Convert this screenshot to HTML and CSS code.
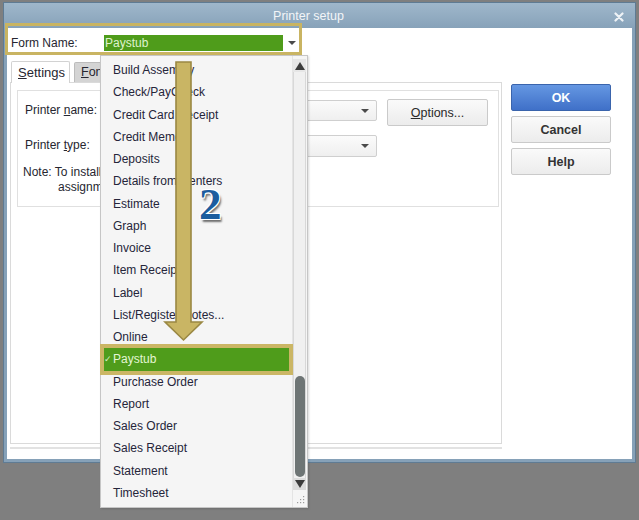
FILE: index.html
```html
<!DOCTYPE html>
<html>
<head>
<meta charset="utf-8">
<title>Printer setup</title>
<link rel="stylesheet" href="styles.css">
</head>
<body>
<div class="dialog">
  <div class="titlebar">
    <span class="title">Printer setup</span>
    <svg class="close" width="10" height="10" viewBox="0 0 10 10"><path d="M1.5 1.5L8.5 8.5M8.5 1.5L1.5 8.5" stroke="#eef2f6" stroke-width="2.2" stroke-linecap="round"/></svg>
  </div>
  <div class="client">
    <div class="formrow">
      <span class="label">Form Name:</span>
      <div class="combo">
        <span class="combo-value">Paystub</span>
        <span class="combo-btn"><i class="tri"></i></span>
      </div>
    </div>
    <div class="main">
      <div class="tabs">
        <div class="tabstrip">
          <div class="tab active"><u>S</u>ettings</div>
          <div class="tab"><u>F</u>onts</div>
        </div>
        <div class="panel">
          <div class="group">
            <div class="prow first">
              <span class="plabel">Printer <u>n</u>ame:</span>
              <div class="pselect"><i class="tri"></i></div>
              <button class="btn options"><u>O</u>ptions...</button>
            </div>
            <div class="prow second">
              <span class="plabel">Printer <u>t</u>ype:</span>
              <div class="pselect tall"><i class="tri"></i></div>
            </div>
            <div class="note">
              <span class="nl1">Note: To install additional printers or to</span>
              <span class="nl2">assignments, use the Windows Control</span>
            </div>
          </div>
        </div>
        <div class="panel-line"></div>
      </div>
      <div class="buttons">
        <button class="btn primary">OK</button>
        <button class="btn">Cancel</button>
        <button class="btn">Help</button>
      </div>
    </div>
  </div>
</div>

<div class="dropdown">
  <ul class="list">
    <li>Build Assembly</li>
    <li>Check/PayCheck</li>
    <li>Credit Card Receipt</li>
    <li>Credit Memo</li>
    <li>Deposits</li>
    <li>Details from Centers</li>
    <li>Estimate</li>
    <li>Graph</li>
    <li>Invoice</li>
    <li>Item Receipt</li>
    <li>Label</li>
    <li>List/Register Notes...</li>
    <li>Online</li>
    <li class="selected"><span class="check">&#10003;</span>Paystub</li>
    <li>Purchase Order</li>
    <li>Report</li>
    <li>Sales Order</li>
    <li>Sales Receipt</li>
    <li>Statement</li>
    <li>Timesheet</li>
  </ul>
  <div class="vscroll">
    <div class="sb-btn"><i class="tri-up"></i></div>
    <div class="sb-track"><div class="sb-thumb"></div></div>
    <div class="sb-btn down"><i class="tri"></i></div>
    <div class="grip">
      <svg width="8" height="8" viewBox="0 0 8 8"><g fill="#9a9a9a"><rect x="6" y="0" width="1.2" height="1.2"/><rect x="3" y="3" width="1.2" height="1.2"/><rect x="6" y="3" width="1.2" height="1.2"/><rect x="0" y="6" width="1.2" height="1.2"/><rect x="3" y="6" width="1.2" height="1.2"/><rect x="6" y="6" width="1.2" height="1.2"/></g></svg>
    </div>
  </div>
</div>

<div class="anno-box"></div>
<svg class="anno-arrow" width="42" height="284" viewBox="0 0 42 284">
  <polygon points="13,2 28,2 28,262 39,262 20.5,280 2,262 13,262" fill="#c9b564" stroke="#9a8843" stroke-width="1.6" stroke-linejoin="miter"/>
</svg>
<div class="anno-num">2</div>
</body>
</html>
```
FILE: styles.css
```css
* { box-sizing: border-box; }
html, body { margin: 0; padding: 0; }
body {
  background: #7f7f7f;
  width: 639px;
  height: 520px;
  overflow: hidden;
  font-family: "Liberation Sans", Arial, sans-serif;
  font-size: 12px;
  color: #262630;
}
u { text-decoration: underline; text-underline-offset: 1px; }

.dialog {
  margin: 2px 0 0 3px;
  width: 633px;
  height: 461px;
  border: 1px solid #5f7b93;
  background: #86a1b8;
  display: flex;
  flex-direction: column;
}
.titlebar {
  height: 25px;
  flex: none;
  background: linear-gradient(#9fb7cb, #87a2b9);
  display: flex;
  align-items: center;
  justify-content: center;
  position: relative;
}
.title {
  color: #f2f5f8;
  font-size: 12.5px;
  padding-right: 22px;
  margin-top: 1px;
}
.close {
  position: absolute;
  right: 11px;
  top: 9px;
}
.client {
  flex: 1;
  margin: 0 3px 3px 3px;
  background: #ffffff;
  padding: 7px 0 0 3px;
}

.formrow {
  display: flex;
  align-items: center;
  height: 16px;
}
.label {
  width: 94px;
  padding-left: 1px;
}
.combo {
  display: flex;
  height: 16px;
  width: 197px;
}
.combo-value {
  width: 179px;
  background: #4f9c1b;
  color: #dff3cd;
  padding-left: 1px;
  line-height: 16px;
}
.combo-btn {
  flex: 1;
  display: flex;
  align-items: center;
  justify-content: center;
  background: #fff;
}
.tri {
  display: block;
  width: 0;
  height: 0;
  border-left: 4px solid transparent;
  border-right: 4px solid transparent;
  border-top: 4px solid #4a4a4a;
}
.tri-up {
  display: block;
  width: 0;
  height: 0;
  border-left: 5px solid transparent;
  border-right: 5px solid transparent;
  border-bottom: 8px solid #3c3c3c;
}

.main {
  display: flex;
  gap: 9px;
  margin-top: 9px;
}
.tabs {
  width: 492px;
}
.tabstrip {
  display: flex;
  align-items: flex-end;
  height: 22px;
}
.tab {
  height: 20px;
  padding: 0 6px;
  margin-left: 4px;
  border: 1px solid #bcbcbc;
  border-bottom: none;
  background: #d4d4d4;
  border-radius: 2px 2px 0 0;
  line-height: 19px;
  font-size: 12.5px;
}
.tab.active {
  height: 22px;
  width: 59px;
  margin-left: 1px;
  background: #fff;
  border-color: #d2d2d2;
  line-height: 22px;
  font-size: 13px;
  position: relative;
  top: 1px;
}
.panel {
  height: 362px;
  border: 1px solid #dadada;
  padding: 7px 2px 0 6px;
}
.panel-line {
  height: 2px;
  margin-top: 3px;
  background: #e2e2e2;
}
.group {
  height: 117px;
  border: 1px solid #e0e0e0;
  padding: 8px 0 0 7px;
}
.prow {
  display: flex;
  align-items: flex-start;
}
.prow.second { margin-top: 9px; }
.plabel {
  width: 75px;
  line-height: 21px;
  margin-top: 1px;
}
.pselect {
  width: 277px;
  height: 21px;
  margin-top: 1px;
  border: 1px solid #cfcfcf;
  border-radius: 2px;
  background: linear-gradient(#fbfbfb, #efefef);
  display: flex;
  align-items: center;
  justify-content: flex-end;
  padding-right: 7px;
}
.pselect.tall { height: 22px; margin-top: 0; }
.prow.second .plabel { margin-top: 0; line-height: 20px; }
.note {
  margin-top: 8px;
  margin-left: -2px;
  line-height: 15px;
  width: 275px;
  overflow: hidden;
  white-space: nowrap;
}
.nl1, .nl2 { display: block; }
.nl2 { padding-left: 35px; }

.btn {
  font-family: "Liberation Sans", Arial, sans-serif;
  font-size: 12.5px;
  color: #333;
  height: 27px;
  width: 100px;
  border: 1px solid #cacaca;
  border-radius: 2px;
  background: linear-gradient(#fafafa, #ececec);
  padding: 0;
}
.btn.options {
  margin-left: 10px;
  width: 101px;
  color: #2a2a2a;
}
.buttons {
  display: flex;
  flex-direction: column;
  gap: 5px;
  margin-top: 24px;
}
.buttons .btn { font-weight: bold; }
.btn.primary {
  color: #fff;
  border-color: #3a64ac;
  background: linear-gradient(#6597e2, #3f70c8);
}

/* popup list */
.dropdown {
  position: absolute;
  left: 100px;
  top: 55px;
  width: 208px;
  height: 453px;
  background: #f5f5f5;
  border: 1px solid #c6c6c6;
  box-shadow: 1px 1px 2px rgba(0,0,0,0.15);
  display: flex;
}
.list {
  list-style: none;
  margin: 0;
  padding: 3px 3px 0 3px;
  width: 191px;
}
.list li {
  height: 22.26px;
  line-height: 22.26px;
  padding-left: 9px;
  white-space: nowrap;
  color: #25253a;
  position: relative;
}
.list li.selected {
  background: #4f9c1b;
  color: #e4f6d4;
  outline: 4px solid #cbb665;
}
.check {
  position: absolute;
  left: 0;
  top: 0;
  font-size: 9px;
  color: #d8efc6;
}
.vscroll {
  width: 14px;
  display: flex;
  flex-direction: column;
  padding-top: 3px;
  border-left: 1px solid #e4e4e4;
}
.sb-btn {
  height: 13px;
  display: flex;
  align-items: center;
  justify-content: center;
  background: #e6e6e6;
}
.sb-btn.down { height: 12px; background: #dcdcdc; }
.sb-btn.down .tri {
  border-left-width: 5px;
  border-right-width: 5px;
  border-top: 8px solid #3c3c3c;
}
.sb-track {
  height: 406px;
  display: flex;
  flex-direction: column;
  align-items: center;
  background: #f0f0f0;
  border-left: 1px solid #d8d8d8;
  border-right: 1px solid #d8d8d8;
}
.sb-thumb {
  margin-top: auto;
  margin-bottom: 1px;
  width: 10px;
  height: 101px;
  border-radius: 5px;
  background: #6e7575;
}
.grip {
  flex: 1;
  display: flex;
  align-items: flex-end;
  justify-content: flex-end;
  padding: 0 1px 3px 0;
}

/* annotations */
.anno-box {
  position: absolute;
  left: 5px;
  top: 23px;
  width: 297px;
  height: 32px;
  border: 3px solid #c9b462;
}
.anno-arrow {
  position: absolute;
  left: 163px;
  top: 60px;
}
.anno-num {
  position: absolute;
  left: 199px;
  top: 182px;
  font-family: "Liberation Serif", "Times New Roman", serif;
  font-weight: bold;
  font-size: 45px;
  line-height: 45px;
  color: #1c5d9e;
  text-shadow: -1px -1px 0 #fff, 1px -1px 0 #fff, -1px 1px 0 #fff, 1px 1px 0 #fff, 2px 3px 2px rgba(0,0,0,0.55);
}
```
